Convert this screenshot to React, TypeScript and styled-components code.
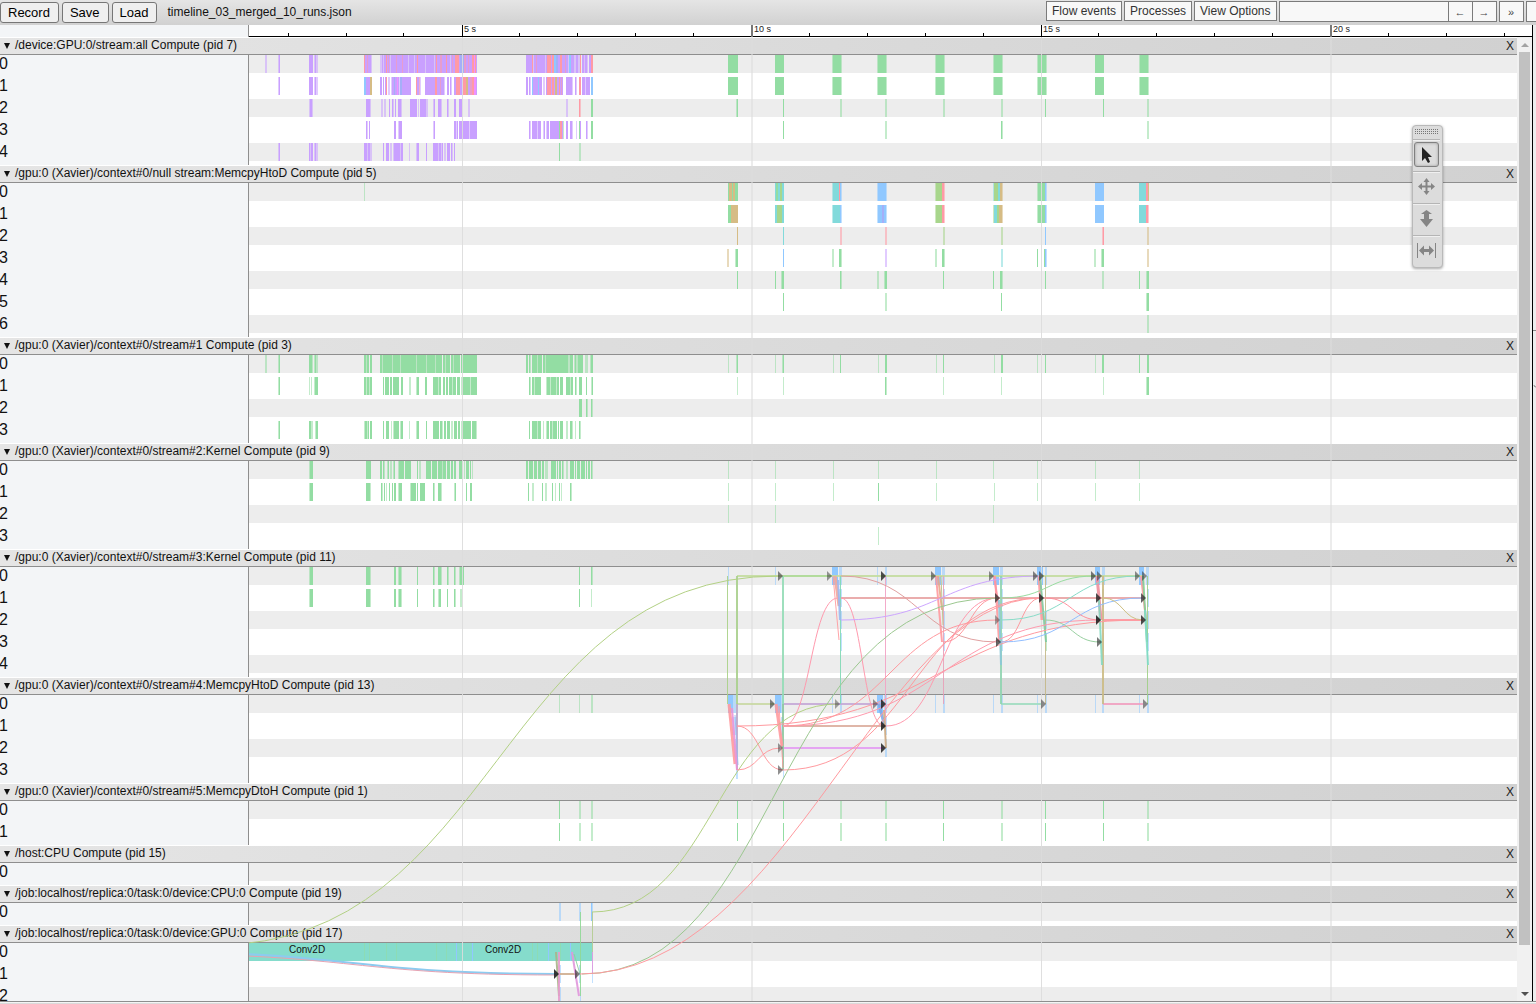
import React from "react";
import styled, { createGlobalStyle } from "styled-components";

const Global = createGlobalStyle`
  html, body { margin: 0; height: 100%; }
  body { font-family: "Liberation Sans", Arial, sans-serif; font-size: 12px; color: #111; background: #fff; overflow: hidden; }
  * { box-sizing: border-box; }
  button, input { font-family: inherit; margin: 0; }
`;

/* ---------- shell ---------- */

const Page = styled.div`
  display: flex;
  flex-direction: column;
  height: 100vh;
`;

const Toolbar = styled.header`
  display: flex;
  align-items: flex-start;
  height: 25px;
  flex: none;
  overflow: hidden;
  background: linear-gradient(#e5e5e5, #d1d1d1);
`;

const FileButtons = styled.div`
  display: flex;
  flex: 1;
  align-items: center;
  gap: 3px;
  padding-top: 1px;
`;

const FileButton = styled.button`
  height: 21px;
  padding: 0 8px 0 7px;
  border: 1px solid #767676;
  border-radius: 3px;
  background: #efefef;
  color: #000;
  font-size: 13px;
  line-height: 19px;
`;

const FileName = styled.span`
  padding-left: 7px;
  line-height: 22px;
`;

const ViewControls = styled.div`
  display: flex;
  align-items: flex-start;
  gap: 2px;
  padding-top: 1px;
  width: 490px;
  flex: none;
  overflow: hidden;
`;

const MenuButton = styled.button`
  flex: none;
  height: 20px;
  padding: 0 5px;
  border: 1px solid #7b7b7b;
  background: #f8f8f8;
  color: #333;
  font-size: 12px;
  line-height: 18px;
  white-space: nowrap;
`;

const FindBox = styled.div`
  display: flex;
  flex: none;
`;

const FindInput = styled.input`
  width: 170px;
  height: 21px;
  padding: 0 4px;
  border: 1px solid #7b7b7b;
  background: #f8f8f8;
  font-size: 12px;
`;

const SmallButton = styled.button<{ $joined?: boolean }>`
  flex: none;
  width: ${(p) => (p.$joined ? 24 : 25)}px;
  height: 21px;
  padding: 2px 0 0;
  border: 1px solid #7b7b7b;
  border-left-width: ${(p) => (p.$joined ? 0 : 1)}px;
  background: #f8f8f8;
  color: #444;
  font-size: 11px;
  line-height: 17px;
`;

const Main = styled.main`
  display: flex;
  flex: 1;
  min-height: 0;
`;

const Timeline = styled.section`
  position: relative;
  display: flex;
  flex-direction: column;
  flex: 1;
  min-width: 0;
`;

const SidePanel = styled.aside`
  width: 4px;
  flex: none;
  border-left: 1px solid #000;
  background: #ededed;
`;

const Footer = styled.footer`
  height: 3px;
  flex: none;
  border-top: 1px solid #8e8e8e;
  border-bottom: 1px solid #dadada;
  background: #f4f4f4;
`;

/* ---------- ruler ---------- */

const RulerRow = styled.div`
  display: flex;
  height: 12px;
  flex: none;
`;

const RulerGutter = styled.div`
  width: 249px;
  flex: none;
  border-right: 1px solid #8e8e8e;
  background: #f3f5f7;
`;

const RulerSvg = styled.svg`
  display: block;
  flex: 1;
  min-width: 0;
  height: 12px;
  border-bottom: 1px solid #000;
  font-size: 9px;
  overflow: visible;
`;

/* ---------- tracks ---------- */

const Viewport = styled.div`
  display: flex;
  flex: 1;
  min-height: 0;
`;

const Tracks = styled.div`
  position: relative;
  flex: 1;
  min-width: 0;
  overflow: hidden;
`;

const TrackHeader = styled.div`
  display: flex;
  align-items: center;
  height: 18px;
  padding: 0 3px 0 4px;
  border-top: 1px solid #fff;
  border-bottom: 1px solid #8e8e8e;
  background: linear-gradient(to right, #e5e5e5, #d1d1d1);
`;

const Collapse = styled.button`
  width: 11px;
  padding: 0;
  border: 0;
  background: none;
  text-align: left;
  line-height: 0;
`;

const TrackTitle = styled.h2`
  flex: 1;
  margin: 0;
  font-size: 12px;
  font-weight: 400;
  line-height: 14px;
  padding-bottom: 2px;
`;

const Close = styled.button`
  padding: 0;
  border: 0;
  background: none;
  color: #222;
  font-size: 12px;
  line-height: 16px;
`;

const TrackBody = styled.div`
  display: flex;
`;

const Labels = styled.div`
  width: 249px;
  flex: none;
  overflow: hidden;
  border-right: 1px solid #8e8e8e;
  background: #f3f5f7;
`;

const Label = styled.div`
  height: 22px;
  margin-left: -1px;
  font-size: 16px;
  line-height: 18px;
`;

const Lanes = styled.div`
  flex: 1;
  min-width: 0;
`;

const Lane = styled.div`
  height: 22px;
  background: #fff;
`;

const LaneSvg = styled.svg<{ $shaded: boolean }>`
  display: block;
  width: 100%;
  height: 18px;
  background: ${(p) => (p.$shaded ? "#ededed" : "#fff")};
  font-size: 10px;
`;

const Overlay = styled.svg`
  position: absolute;
  inset: 0;
  width: 100%;
  height: 100%;
  pointer-events: none;
`;

/* ---------- scrollbar ---------- */

const Scrollbar = styled.div`
  display: flex;
  flex-direction: column;
  width: 15px;
  flex: none;
  background: #f1f1f1;
`;

const ScrollArrow = styled.button`
  display: flex;
  align-items: center;
  justify-content: center;
  height: 15px;
  flex: none;
  padding: 0;
  border: 0;
  background: none;
`;

const ScrollTrack = styled.div`
  display: grid;
  grid-template-rows: 22fr 1fr;
  flex: 1;
  padding: 0 2px;
`;

const Thumb = styled.div`
  background: #c1c1c1;
`;

/* ---------- floating mouse mode palette ---------- */

const Palette = styled.div`
  position: absolute;
  top: 100px;
  right: 89px;
  width: 31px;
  padding: 0 2px 0 0;
  border: 1px solid #b9b9b9;
  border-radius: 4px;
  background: #dcdcdc;
  box-shadow: 0 1px 3px rgba(0, 0, 0, 0.35);
`;

const Grip = styled.div`
  height: 13px;
  padding: 3px 0 0 2px;
  line-height: 0;
`;

const Mode = styled.div`
  height: 32px;
  padding: 2px 0 0 1px;
  border-top: 1px solid #b5b5b5;
  box-shadow: inset 0 1px 0 #f0f0f0;
`;

const ModeButton = styled.button<{ $active?: boolean }>`
  display: flex;
  align-items: center;
  justify-content: center;
  width: 25px;
  height: 25px;
  padding: 0;
  border: 1px solid ${(p) => (p.$active ? "#808080" : "transparent")};
  border-radius: 3px;
  background: none;
  box-shadow: ${(p) => (p.$active ? "inset 0 0 3px rgba(0,0,0,.3)" : "none")};
`;

/* ---------- data ---------- */

const ORIGIN = 249;
const TOP = 37;

const COLORS: Record<string, string> = {
  p: "#c9a0ff",
  s: "#ff9aa5",
  g: "#93dda3",
  b: "#90c8ff",
  t: "#82dadb",
  y: "#d6bc85",
  o: "#a8d68c",
  m: "#f18fff",
  v: "#a5aff8",
  w: "#85dccc",
};

/* Every slice is written as colour, start, "+", width; "~" marks a half-covered one. */
const SLICE = /([a-z])(\d+)\+(\d+)(~?)/g;

const tint = (c: string, s: string) => s.replace(/(^| )(?=\d)/g, `$1${c}`);

const ends9 = "728+10 775+9 832+1~ 833+8 841+1~ 877+1~ 878+8 886+1~ 935+1~ 936+8 944+1~ 993+1~ 994+8 1002+1~ 1037+1~ 1038+8 1046+1~ 1095+9 1139+1~ 1140+8 1148+1~";
const faintBlue = "b832+1~ b840+2~ b935+1~ b943+2~ b993+1~ b1001+2~ b1037+1~ b1045+2~ b1095+1~ b1102+2~ b1139+1~ b1147+2~";
const dtoh = tint("g", "559+1 579+2~ 591+2~ 737+1 783+1 840+2~ 885+2~ 943+1 1001+2~ 1045+1 1103+1 1147+2~");

interface Track {
  title: string;
  lanes: string[];
}

const TRACKS: Track[] = [
  {
    title: "/device:GPU:0/stream:all Compute (pid 7)",
    lanes: [
      tint("p", "265+2~ 278+1~ 279+1 309+4 314+1~ 315+1 316+2~ 365+6 371+1~ 380+2~ 382+1 383+1~ 384+6 390+1~ 391+17 408+1~ 409+5 414+1~ 415+10 425+1~ 426+8 434+1~ 435+15 450+1~ 451+26 526+7 533+1~ 534+11 545+1~ 546+22 568+1~ 571+3 574+2~ 576+2 578+2~ 582+2 584+1~ 585+2 587+1~ 589+2") +
        " s364+1 s367+1~ s386+1 s388+1~ s396+1~ s402+1~ s417+1 s436+1 s440+2~ s446+1 s452+1~ s455+4 v460+4 s464+2~ s468+1~ s472+2 m474+1 s475+1 s532+1 s536+1~ s547+4 s552+2 b554+2 v556+2 s560+2 s565+1~ b569+2 s580+1 s591+2 " +
        tint("g", ends9),
      tint("p", "278+1~ 279+1 309+4 314+1~ 315+1 316+2~ 366+4 380+2 383+1 385+1 388+2~ 391+1~ 392+7 399+1~ 400+11 417+2 419+2~ 425+17 442+2 444+1~ 447+2 450+1 451+1~ 454+1 455+22 526+2 529+1 530+1~ 532+10 543+2~ 546+17 566+2 568+4 572+1~ 575+1 576+1~ 582+3 585+1~ 586+4") +
        " b364+2 y370+2 s386+1 m397+1 v400+2 v394+1 s416+1 s419+1~ s435+2 s440+1~ s456+4 s463+3 y466+2 s470+2~ s472+3 m474+2 b532+1 b538+1 s547+4 s552+2 y555+2 s559+1 s561+1~ s579+2 b591+2 " +
        tint("g", ends9),
      tint("p", "309+1~ 310+2 312+1~ 366+4 370+1~ 381+2~ 384+2~ 389+1 392+1 393+1~ 395+1 398+3 401+1~ 410+7 418+1~ 420+6 426+2~ 433+1~ 434+1 438+3 441+1~ 447+1 448+1~ 454+2 459+1 460+2 468+2~ 566+2~") +
        tint("g", " 591+2 736+1~ 737+1 783+1 840+2~ 885+2~ 943+2~ 1001+2~ 1045+1 1103+1 1147+2~") + " s579+1 s580+1~",
      tint("p", "366+1 367+1~ 369+1 394+2 398+1~ 399+3 433+1~ 434+1 454+2 456+2~ 457+1 459+2 461+8 469+1~ 470+5 475+2 529+1 530+1~ 532+5 537+1~ 538+3 543+1~ 544+1 546+1~ 547+2 550+9 562+1 566+2 570+2 572+1~ 576+1~ 580+1 586+1 587+1~") +
        " g559+1 s560+2 g563+1~ g579+1 g591+2 g783+1 g885+2~ g1001+1 g1002+1~ g1147+2~",
      tint("p", "278+1~ 279+1 309+1 310+1~ 311+2 314+1~ 315+1 316+2~ 364+3 367+1~ 368+2 370+2~ 383+1 386+3 390+2~ 393+1~ 394+6 400+1~ 401+2 409+1~ 416+1~ 417+2 426+1 433+5 438+1~ 439+2 441+1~ 442+1 444+2~ 447+3 451+1 452+1~ 454+1") +
        " g559+1 g579+2~",
    ],
  },
  {
    title: "/gpu:0 (Xavier)/context#0/null stream:MemcpyHtoD Compute (pid 5)",
    lanes: [
      "g364+1~ g728+1 y729+3 g732+1 y733+2 g735+3 t775+1 g776+2 t778+2 o780+2 t782+2 t832+1~ t833+6 s839+1 b840+1 b841+1~ b877+1~ b878+8 b886+1~ o935+1~ o936+6 s942+2 s944+1~ t993+1~ o994+4 t998+2 y1000+2 y1002+1~ g1037+1~ g1038+7 b1045+1 b1046+1~ b1095+9 t1139+7 s1146+2 y1148+1",
      "g728+3 y731+7 t775+2 o777+5 t782+2 t832+1~ t833+7 b840+1 b841+1~ b877+1~ b878+4 v882+2 b884+2 b886+1~ o935+1~ o936+6 s942+2 s944+1~ o993+1~ t994+3 o997+2 y999+3 y1002+1~ g1037+1~ g1038+7 b1045+1 b1046+1~ b1095+9 t1139+7 s1146+2 s1148+1~",
      "y737+1 t783+1 s840+2~ s885+2~ o943+2~ o1001+2~ b1045+1 s1102+1~ s1103+1 y1147+2~",
      "y727+2~ g735+1~ g736+2 b783+1 g832+2~ g839+2 g841+1~ p885+2~ g935+2~ g942+2 g944+1~ t1001+2~ g1037+1 g1044+1 b1045+1 b1046+1~ g1094+2~ g1101+1~ g1102+2 y1147+2~",
      tint("g", "737+1 775+1 781+1~ 782+2 840+1 841+1~ 877+2~ 884+1~ 885+2 943+1 993+1 1000+2 1002+1~ 1045+1 1102+2~ 1139+1 1146+1~ 1147+2"),
      tint("g", "783+1 885+2~ 1001+1 1146+1~ 1147+2"),
      "g1147+2~",
    ],
  },
  {
    title: "/gpu:0 (Xavier)/context#0/stream#1 Compute (pid 3)",
    lanes: [
      tint("g", "265+2~ 278+1~ 279+1 309+3 312+1~ 314+1~ 315+1 316+2~ 364+2 366+1~ 367+2 370+2 380+2 382+1~ 383+9 392+1~ 393+7 400+1~ 401+15 416+1~ 417+9 426+1~ 427+8 435+1~ 436+6 443+2 445+1~ 446+4 451+2 453+1~ 454+6 461+16 526+2 529+1 530+1~ 532+5 537+1~ 538+4 543+2 545+1~ 546+1 547+21 568+2~ 570+3 574+1~ 575+1 576+2~ 578+5 585+3~ 590+1~ 591+2 728+1~ 736+1~ 737+1 775+1~ 782+1~ 783+1 833+1~ 840+1 878+1~ 885+2 936+1~ 943+1 994+1~ 1001+2 1037+1~ 1045+1 1095+1~ 1102+2 1139+1 1147+2"),
      tint("g", "278+1~ 279+1 309+1~ 311+1~ 314+1~ 315+1 316+2 364+2 366+1~ 367+2 369+1~ 370+2 383+1 385+2 387+2 390+2 393+6 401+2 409+2~ 416+1~ 417+2 425+2 433+5 438+1~ 439+2 443+2 446+2 449+3 452+1~ 453+3 457+3 461+1~ 462+8 470+1~ 471+6 529+1 530+1~ 532+2 534+1~ 535+6 546+1~ 547+3 550+1~ 551+5 556+1~ 557+2 560+3 566+4 570+1~ 571+2 575+1 576+1~ 579+3 586+1 591+1~ 592+1 737+1~ 783+1~ 885+1 886+1~ 943+1~ 1001+1~ 1103+1~ 1146+1~ 1147+2"),
      tint("g", "579+1 580+2 586+1 587+1~ 591+1 592+1~"),
      tint("g", "278+1~ 279+1 309+2 311+2~ 315+1~ 316+2 364+1~ 365+2 367+1~ 368+1 370+2 383+1 386+3 391+1~ 393+1~ 394+5 400+1~ 401+2 409+1~ 416+1~ 417+2 426+1 433+6 440+2 442+1~ 444+2 447+3 451+2~ 454+3 458+2 461+1~ 462+8 470+1 472+4 476+1~ 529+1 532+5 537+1~ 538+3 543+1~ 546+1~ 547+2 550+2 552+1~ 553+4 558+1 560+3 566+2~ 570+2 572+1~ 575+1~ 579+1 580+1~"),
    ],
  },
  {
    title: "/gpu:0 (Xavier)/context#0/stream#2:Kernel Compute (pid 9)",
    lanes: [
      tint("g", "309+1~ 310+3 366+5 380+2 383+1 384+1~ 387+1~ 388+1 390+2~ 393+1~ 394+1 398+1~ 399+5 405+1 406+5 417+1 419+2~ 426+5 432+2 434+3 438+4 442+1~ 443+3 447+3 451+2 454+2 459+4 464+1~ 466+3 470+1 472+1~ 526+2 529+3 532+1 534+3 538+3 542+2 545+3~ 551+5 557+1 559+2 562+1 563+1~ 566+2~ 570+4 575+1 577+3 581+4 586+1 588+2 591+1 592+1~ 728+1~ 775+1~ 833+1~ 878+1~ 936+1~ 993+1~ 1037+1~ 1095+1~ 1139+1~"),
      tint("g", "309+1~ 310+3 366+4 370+1~ 381+1 382+1~ 384+1 386+1~ 389+1 392+1 394+2 398+1~ 399+3 410+1~ 411+5 417+1 420+5 433+1 434+1~ 438+3 441+1~ 454+1~ 455+1 466+1 470+2 528+1 532+2~ 542+1 545+2~ 552+1 555+1~ 559+1 561+1~ 570+1 571+1~ 728+1~ 775+1~ 833+1~ 878+1 936+1~ 994+1~ 1037+1~ 1095+1~ 1139+1~"),
      tint("g", "728+1~ 775+1~ 993+1~"),
      "g878+1~",
    ],
  },
  {
    title: "/gpu:0 (Xavier)/context#0/stream#3:Kernel Compute (pid 11)",
    lanes: [
      tint("g", "309+1~ 310+2 312+1 366+4 370+1~ 394+2 398+1~ 399+2 401+1~ 417+1 433+1 434+1~ 438+3 441+1~ 447+1 448+1~ 454+1 455+1~ 459+1~ 460+4 579+1 591+1 592+1~") +
        " b728+1~ b775+1~ b832+6 b839+3~ b877+1~ b885+2~ b935+6 b942+3~ b993+6 b1000+3~ b1037+6 b1045+2~ b1095+5 b1102+3~ b1139+5 b1146+3~",
      tint("g", "309+1~ 310+3 366+4 370+1~ 394+2 398+1~ 399+2 401+1~ 417+1 433+1 434+1~ 438+1~ 439+2 447+1 454+1 455+1~ 460+2~ 579+1 591+1~") + " b839+3~ b943+2~ b1001+2~ b1045+1~ b1102+2~ b1147+2~",
      "b841+1~ b944+1~ b1001+2~ b1045+2~ b1103+1~ b1148+1~",
      "b841+1~ b944+1~ b1002+1~ g1046+1~ b1103+1~ b1148+1~",
      "",
    ],
  },
  {
    title: "/gpu:0 (Xavier)/context#0/stream#4:MemcpyHtoD Compute (pid 13)",
    lanes: [
      "g559+1~ g579+1~ g591+2~ b728+5 b733+3~ b775+6 b781+3~ b877+6 b884+3~ " + faintBlue,
      "b732+5~ b781+2~ b885+2~",
      "b734+4~ b782+2~ b885+2~",
      "b736+2~ b783+1~",
    ],
  },
  { title: "/gpu:0 (Xavier)/context#0/stream#5:MemcpyDtoH Compute (pid 1)", lanes: [dtoh, dtoh] },
  { title: "/host:CPU Compute (pid 15)", lanes: [""] },
  { title: "/job:localhost/replica:0/task:0/device:CPU:0 Compute (pid 19)", lanes: ["b559+2~ b579+2~ b591+1 b592+1~"] },
  {
    title: "/job:localhost/replica:0/task:0/device:GPU:0 Compute (pid 17)",
    lanes: [
      "w249+343 g364+1~ g369+1~ g386+1~ g396+1~ g436+1~ g446+1~ b456+1 b472+1 g532+1~ g537+1~ b548+1 g560+1~ b570+1 b592+1~",
      "b559+2~ b579+2~ b592+1~",
      "b560+1~ b580+1~",
    ],
  },
];

const SLICE_NAMES = [
  { x: 289, name: "Conv2D" },
  { x: 485, name: "Conv2D" },
];

const MAJOR = [
  { x: 462, w: 1, label: "5 s" },
  { x: 751, w: 2, label: "10 s" },
  { x: 1041, w: 1, label: "15 s" },
  { x: 1330, w: 2, label: "20 s" },
];

const MINOR = [288, 346, 403, 519, 577, 635, 693, 809, 867, 925, 983, 1098, 1156, 1214, 1272, 1388, 1446, 1504];

const SAL = "#ff9a9f";
const OLV = "#b3d185";
const SAGE = "#9cc890";

/* colour, x1, y1, x2, y2, stroke width */
type Flow = [string, number, number, number, number, number?];

const CURVES: Flow[] = [
  [OLV, 215, 945, 779, 576],
  [OLV, 592, 912, 838, 704],
  [SAL, 737, 726, 783, 770],
  [SAL, 737, 770, 780, 748],
  [SAL, 737, 726, 1143, 620],
  ["#ff9aae", 783, 726, 1100, 620],
  [SAL, 783, 726, 997, 620],
  [SAL, 783, 770, 1041, 598],
  ["#ff9aae", 783, 726, 838, 598],
  ["#ff9aae", 841, 598, 884, 726],
  ["#e0a0a0", 841, 576, 997, 642],
  ["#cda6ff", 841, 620, 1041, 576],
  ["#ff9aae", 886, 726, 997, 598],
  [SAL, 943, 642, 997, 598],
  [SAL, 1001, 642, 1041, 598],
  ["#93bfff", 1001, 642, 1143, 598],
  ["#88dcc8", 1001, 620, 1139, 576],
  ["#98dca0", 1001, 598, 1095, 576],
  ["#98d0a0", 1045, 620, 1100, 642],
  ["#ff8f9c", 1045, 598, 1100, 620],
  ["#cfc084", 1103, 598, 1143, 620],
  ["#8ccbf0", 150, 952, 556, 974, 2],
  ["#e6a3b3", 150, 954, 556, 975],
];

const LINES: Flow[] = [
  ["#c3dc9f", 737, 576, 1143, 576, 2],
  ["#98d890", 783, 576, 832, 576, 1],
  ["#e8a4a4", 841, 598, 1143, 598, 2],
  ["#c9d8a4", 737, 704, 774, 704, 2],
  ["#c4a8d6", 783, 704, 884, 704, 2],
  ["#dcae9f", 783, 726, 884, 726, 2],
  ["#e39cf2", 783, 748, 884, 748, 2],
  ["#a0dcc0", 1001, 704, 1041, 704, 2],
  ["#f0a0c0", 1103, 704, 1143, 704, 2],
  ["#ff95a0", 1103, 620, 1143, 620, 2],
  ["#a9d086", 727, 576, 727, 704],
  ["#a8cf8c", 737, 576, 737, 704, 2],
  ["#b9a9c9", 737, 704, 737, 770, 2],
  ["#93dcb6", 783, 576, 783, 704, 2],
  ["#8fc8a0", 783, 704, 783, 770, 2],
  ["#80d8b4", 840, 576, 840, 704],
  ["#f2a2c4", 885, 576, 885, 748],
  ["#e8a0b8", 943, 576, 943, 704],
  ["#90d4b0", 1001, 576, 1001, 704, 2],
  ["#c4b888", 1045, 576, 1045, 704],
  ["#ccbb84", 1103, 576, 1103, 704, 2],
  ["#a0cf86", 1147, 576, 1147, 704],
  [SAL, 729, 704, 735, 764, 3],
  ["#e995d8", 732, 708, 737, 770, 2],
  ["#a0b8f0", 735, 715, 738, 765],
  [SAL, 776, 704, 782, 746, 3],
  [SAL, 779, 706, 783, 768],
  ["#7fa8e8", 879, 704, 884, 724, 3],
  ["#cdae84", 884, 710, 886, 748, 2],
  [SAL, 833, 576, 839, 640],
  ["#f2a79c", 835, 576, 839, 606, 3],
  ["#9ab8f0", 838, 580, 840, 620, 2],
  [SAL, 936, 576, 942, 642, 2],
  ["#e6a78a", 938, 576, 942, 610, 2],
  ["#b8c088", 941, 576, 943, 625],
  [SAL, 995, 576, 999, 642, 2],
  ["#ff95a0", 994, 576, 999, 608, 2],
  ["#8cc8d8", 999, 600, 1001, 665, 2],
  [SAL, 1039, 576, 1042, 620, 3],
  ["#7fcaa0", 1040, 576, 1046, 642, 2],
  ["#f08f9c", 1097, 576, 1101, 620, 3],
  ["#84d8c0", 1099, 600, 1102, 665, 2],
  [SAL, 1141, 576, 1146, 620, 2],
  ["#86cc94", 1143, 576, 1147, 642, 2],
  ["#80dcc8", 1145, 610, 1148, 665, 2],
  ["#cfae90", 559, 974, 577, 974, 2],
  ["#a8b488", 556, 952, 559, 996, 2],
  ["#e69ccc", 559, 952, 559, 1001, 2],
  ["#e096dc", 572, 952, 579, 996, 2],
  ["#8cd09c", 574, 954, 580, 974],
  ["#90d896", 580, 912, 580, 996],
  ["#b4cc90", 592, 912, 592, 952],
  ["#dd98e0", 592, 952, 592, 974],
];

/* x and y of the tip, opacity */
const HEADS: [number, number, number][] = [
  [783, 576, 0.55], [832, 576, 0.45], [886, 576, 0.8], [936, 576, 0.55], [994, 576, 0.5], [1038, 576, 0.55], [1044, 576, 0.6],
  [1096, 576, 0.6], [1102, 576, 0.5], [1140, 576, 0.5], [1147, 576, 0.5],
  [1000, 598, 0.7], [1044, 598, 0.8], [1101, 598, 0.8], [1146, 598, 0.7],
  [1000, 620, 0.4], [1101, 620, 0.9], [1146, 620, 0.8], [1001, 642, 0.7], [1102, 642, 0.6],
  [775, 704, 0.55], [840, 704, 0.4], [878, 704, 0.45], [886, 704, 0.85], [1046, 704, 0.5], [1148, 704, 0.5],
  [886, 726, 0.9], [783, 748, 0.45], [886, 748, 0.85], [783, 770, 0.5], [559, 974, 0.9], [580, 974, 0.6],
];

const bend = ([, x1, y1, x2, y2]: Flow) => {
  const mid = (x1 + x2) / 2;
  return `M${x1} ${y1}C${mid} ${y1} ${mid} ${y2} ${x2} ${y2}`;
};

/* ---------- parts ---------- */

function Slices({ spec }: { spec: string }) {
  return (
    <>
      {[...spec.matchAll(SLICE)].map((m, i) => (
        <rect key={i} x={+m[2] - ORIGIN} y={0} width={m[3]} height={18} fill={COLORS[m[1]]} opacity={m[4] ? 0.55 : 1} />
      ))}
    </>
  );
}

function Ruler() {
  return (
    <RulerRow>
      <RulerGutter />
      <RulerSvg aria-label="Time ruler">
        {MINOR.map((x) => (
          <rect key={x} x={x - ORIGIN} y={8} width={1} height={3} />
        ))}
        {MAJOR.map((t) => (
          <g key={t.x}>
            <rect x={t.x - ORIGIN} y={0} width={t.w} height={12} fill={t.w === 2 ? "#777" : "#000"} />
            <text x={t.x - ORIGIN + t.w + 1} y={7} fill="#222">{t.label}</text>
          </g>
        ))}
      </RulerSvg>
    </RulerRow>
  );
}

function TrackView({ track, last }: { track: Track; last: boolean }) {
  return (
    <section>
      <TrackHeader>
        <Collapse aria-label={`Collapse ${track.title}`}>
          <svg width="7" height="7"><path d="M0 0h6L3 6z" fill="#111" /></svg>
        </Collapse>
        <TrackTitle>{track.title}</TrackTitle>
        <Close>X</Close>
      </TrackHeader>
      <TrackBody>
        <Labels>
          {track.lanes.map((_, i) => (
            <Label key={i}>{i}</Label>
          ))}
        </Labels>
        <Lanes>
          {track.lanes.map((spec, i) => (
            <Lane key={i}>
              <LaneSvg $shaded={i % 2 === 0}>
                <Slices spec={spec} />
                {last && i === 0 && SLICE_NAMES.map((s) => (
                  <text key={s.x} x={s.x - ORIGIN} y={10} fill="#111">{s.name}</text>
                ))}
              </LaneSvg>
            </Lane>
          ))}
        </Lanes>
      </TrackBody>
    </section>
  );
}

function Flows() {
  return (
    <Overlay aria-hidden="true">
      {MAJOR.map((t) => (
        <rect key={t.x} x={t.x} y={0} width={t.w} height="100%" fill="#dcdcdc" opacity={t.w === 2 ? 0.55 : 0.9} />
      ))}
      <svg x={ORIGIN} y={0} width="100%" height="100%">
        <g transform={`translate(${-ORIGIN} ${-TOP})`} fill="none">
          {LINES.map(([c, x1, y1, x2, y2, w = 1], i) => {
            const dx = x1 === x2 && w === 1 ? 0.5 : 0;
            return <line key={i} x1={x1 + dx} y1={y1} x2={x2 + dx} y2={y2} stroke={c} strokeWidth={w} opacity={0.9} />;
          })}
          {CURVES.map((f, i) => (
            <path key={i} d={bend(f)} stroke={f[0]} strokeWidth={f[5] ?? 1} />
          ))}
          <path d="M582 974C782 974 770 598 997 598" stroke={SAGE} />
          <path d="M580 974C790 974 880 598 1041 598" stroke={SAL} />
          {HEADS.map(([x, y, o], i) => (
            <path key={i} d={`M${x} ${y}l-5 -5v10z`} fill="#222" opacity={o} />
          ))}
        </g>
      </svg>
    </Overlay>
  );
}

function GripDots() {
  const dots: React.ReactNode[] = [];
  for (let r = 0; r < 3; r++)
    for (let c = 0; c < 12; c++) dots.push(<rect key={`${r}-${c}`} x={c * 2} y={r * 2} width={1} height={1} fill="#777" />);
  return <svg width="24" height="6">{dots}</svg>;
}

function ModePalette() {
  return (
    <Palette role="toolbar" aria-label="Mouse mode">
      <Grip><GripDots /></Grip>
      <Mode>
        <ModeButton $active aria-label="Selection">
          <svg width="17" height="17"><path d="M4 1v14l3-3 3 5 2-1-2-5h4z" fill="#222" /></svg>
        </ModeButton>
      </Mode>
      <Mode>
        <ModeButton aria-label="Pan">
          <svg width="17" height="17"><path d="M8.5 0l3 4H9.500v3.500H13v-2.500l4 3.500-4 3.500v-2.500H9.500V13h2l-3 4-3-4h2V9.500H4v2.500l-4-3.500 4-3.500v2.500h3.500V4h-2z" fill="#858585" /></svg>
        </ModeButton>
      </Mode>
      <Mode>
        <ModeButton aria-label="Zoom">
          <svg width="17" height="17"><path d="M8.5 0L14 4h-3v5h4L8.500 17 2 9h4V4H3z" fill="#858585" /></svg>
        </ModeButton>
      </Mode>
      <Mode>
        <ModeButton aria-label="Timing">
          <svg width="20" height="17"><path d="M0 1h1v15H0zM18 1h1v15h-1zM2 8.500l5-5v3.500h5V3.500l5 5-5 5V10H7v3.500z" fill="#858585" /></svg>
        </ModeButton>
      </Mode>
    </Palette>
  );
}

export default function App() {
  return (
    <Page>
      <Global />
      <Toolbar>
        <FileButtons>
          <FileButton>Record</FileButton>
          <FileButton>Save</FileButton>
          <FileButton>Load</FileButton>
          <FileName>timeline_03_merged_10_runs.json</FileName>
        </FileButtons>
        <ViewControls>
          <MenuButton>Flow events</MenuButton>
          <MenuButton>Processes</MenuButton>
          <MenuButton>View Options</MenuButton>
          <FindBox>
            <FindInput type="text" aria-label="Find" />
            <SmallButton $joined aria-label="Previous">←</SmallButton>
            <SmallButton $joined aria-label="Next">→</SmallButton>
          </FindBox>
          <SmallButton aria-label="Toggle metadata">»</SmallButton>
          <SmallButton aria-label="Help" />
        </ViewControls>
      </Toolbar>
      <Main>
        <Timeline>
          <Ruler />
          <Viewport>
            <Tracks>
              {TRACKS.map((t, i) => (
                <TrackView key={t.title} track={t} last={i === TRACKS.length - 1} />
              ))}
              <Flows />
            </Tracks>
            <Scrollbar>
              <ScrollArrow aria-label="Scroll up"><svg width="8" height="4"><path d="M4 0l4 4H0z" fill="#a3a3a3" /></svg></ScrollArrow>
              <ScrollTrack><Thumb /></ScrollTrack>
              <ScrollArrow aria-label="Scroll down"><svg width="8" height="4"><path d="M0 0h8L4 4z" fill="#505050" /></svg></ScrollArrow>
            </Scrollbar>
          </Viewport>
          <ModePalette />
        </Timeline>
        <SidePanel>
          <svg width="3" height="400" aria-hidden="true"><path d="M0 305.500h3M1 360q0 2 2 2" stroke="#888" fill="none" /></svg>
        </SidePanel>
      </Main>
      <Footer />
    </Page>
  );
}
